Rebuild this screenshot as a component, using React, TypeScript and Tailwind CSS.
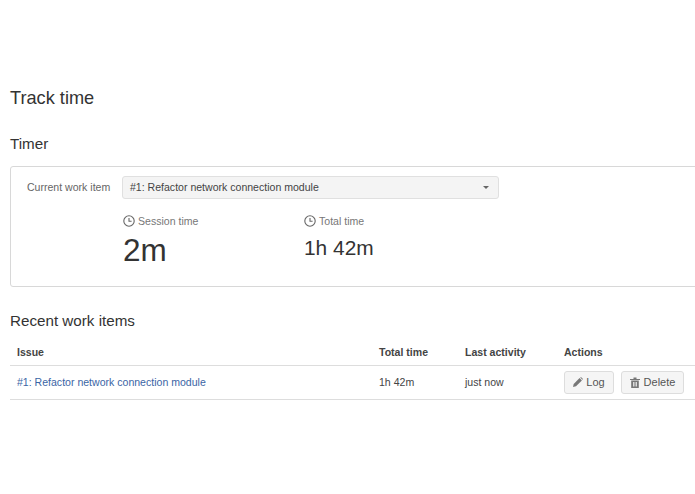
import React from 'react'

const font = "[font-family:'Liberation_Sans',Arial,sans-serif]"

const ClockIcon = () => (
  <svg width="12" height="12" viewBox="0 0 12 12" fill="none" stroke="#666" className="shrink-0">
    <circle cx="6" cy="6" r="5.2" strokeWidth="1.1" />
    <path d="M6 3v3.3h2.6" strokeWidth="1.1" />
  </svg>
)

const PencilIcon = () => (
  <svg width="10" height="10" viewBox="0 0 10 10" fill="#777" className="shrink-0">
    <path d="M0 10l.7-3L6.6 1.100l2.300 2.300L3 9.300z" />
    <path d="M7.300.5l.6-.5 2.100 2.100-.6.6z" />
  </svg>
)

const TrashIcon = () => (
  <svg width="10" height="11" viewBox="0 0 10 11" fill="#777" className="shrink-0">
    <path d="M0 2h10v1H0zM3.500.5h3V2h-3z" />
    <path d="M1.200 3.500h7.600V11H1.200zM3 5v4.500h.8V5zm1.600 0v4.500h.8V5zm1.600 0v4.500H7V5z" fillRule="evenodd" />
  </svg>
)

const Stat = ({ label, value, big }: { label: string; value: string; big?: boolean }) => (
  <div className="flex flex-col">
    <div className="flex items-center gap-[3px] text-[10.55px] leading-[14px] text-[#777]">
      <ClockIcon />
      <span>{label}</span>
    </div>
    <div className={big ? 'text-[31.500px] leading-[44px] text-[#333]' : 'mt-[3px] text-[20.900px] leading-[34px] text-[#333]'}>
      {value}
    </div>
  </div>
)

export default function App() {
  return (
    <div className={`${font} h-[494px] w-[695px] overflow-hidden bg-white pl-[10px] pt-[87px] text-[#333]`}>
      <h1 className="text-[18.200px] leading-[23px] text-[#333]">Track time</h1>

      <h2 className="mt-[24px] text-[15.200px] leading-[20px]">Timer</h2>

      {/* Timer panel runs off the right edge */}
      <div className="mt-[12px] h-[121px] w-[720px] rounded-[3px] border border-[#d8d8d8] pl-[16px] pt-[9px]">
        <div className="flex items-center">
          <label className="w-[95px] shrink-0 text-[10.55px] text-[#666]">Current work item</label>
          <div className="flex h-[23px] w-[377px] items-center justify-between rounded-[3px] border border-[#e0e0e0] bg-[#f4f4f4] pl-[7px] pr-[9px] text-[10.55px] text-[#444]">
            <span>#1: Refactor network connection module</span>
            <span className="h-0 w-0 border-x-[3px] border-t-[3px] border-x-transparent border-t-[#666]" />
          </div>
        </div>
        <div className="ml-[96px] mt-[15px] flex">
          <div className="w-[181px]">
            <Stat label="Session time" value="2m" big />
          </div>
          <Stat label="Total time" value="1h 42m" />
        </div>
      </div>

      <h2 className="mt-[24px] text-[15.200px] leading-[20px]">Recent work items</h2>

      <table className="mt-[7px] w-[685px] table-fixed border-collapse text-[10.55px] text-[#444]">
        <thead>
          <tr className="h-[27px] border-b border-[#ddd] text-left font-bold">
            <th className="w-[362px] pl-[7px] pt-[4px]">Issue</th>
            <th className="w-[86px] pl-[7px] pt-[4px]">Total time</th>
            <th className="w-[99px] pl-[7px] pt-[4px]">Last activity</th>
            <th className="pl-[7px] pt-[4px]">Actions</th>
          </tr>
        </thead>
        <tbody>
          <tr className="h-[34px] border-b border-[#ddd]">
            <td className="pl-[7px] pt-[2px] text-[#3a65a5]">#1: Refactor network connection module</td>
            <td className="pl-[7px] pt-[2px]">1h 42m</td>
            <td className="pl-[7px] pt-[2px]">just now</td>
            <td className="pl-[7px]">
              <div className="flex gap-[7px] text-[11px] text-[#555]">
                <button className="flex h-[23px] w-[50px] items-center justify-center gap-[3px] rounded-[3px] border border-[#ddd] bg-[#f5f5f5]">
                  <PencilIcon />
                  Log
                </button>
                <button className="flex h-[23px] w-[63px] items-center justify-center gap-[4px] rounded-[3px] border border-[#ddd] bg-[#f5f5f5]">
                  <TrashIcon />
                  Delete
                </button>
              </div>
            </td>
          </tr>
        </tbody>
      </table>
    </div>
  )
}
